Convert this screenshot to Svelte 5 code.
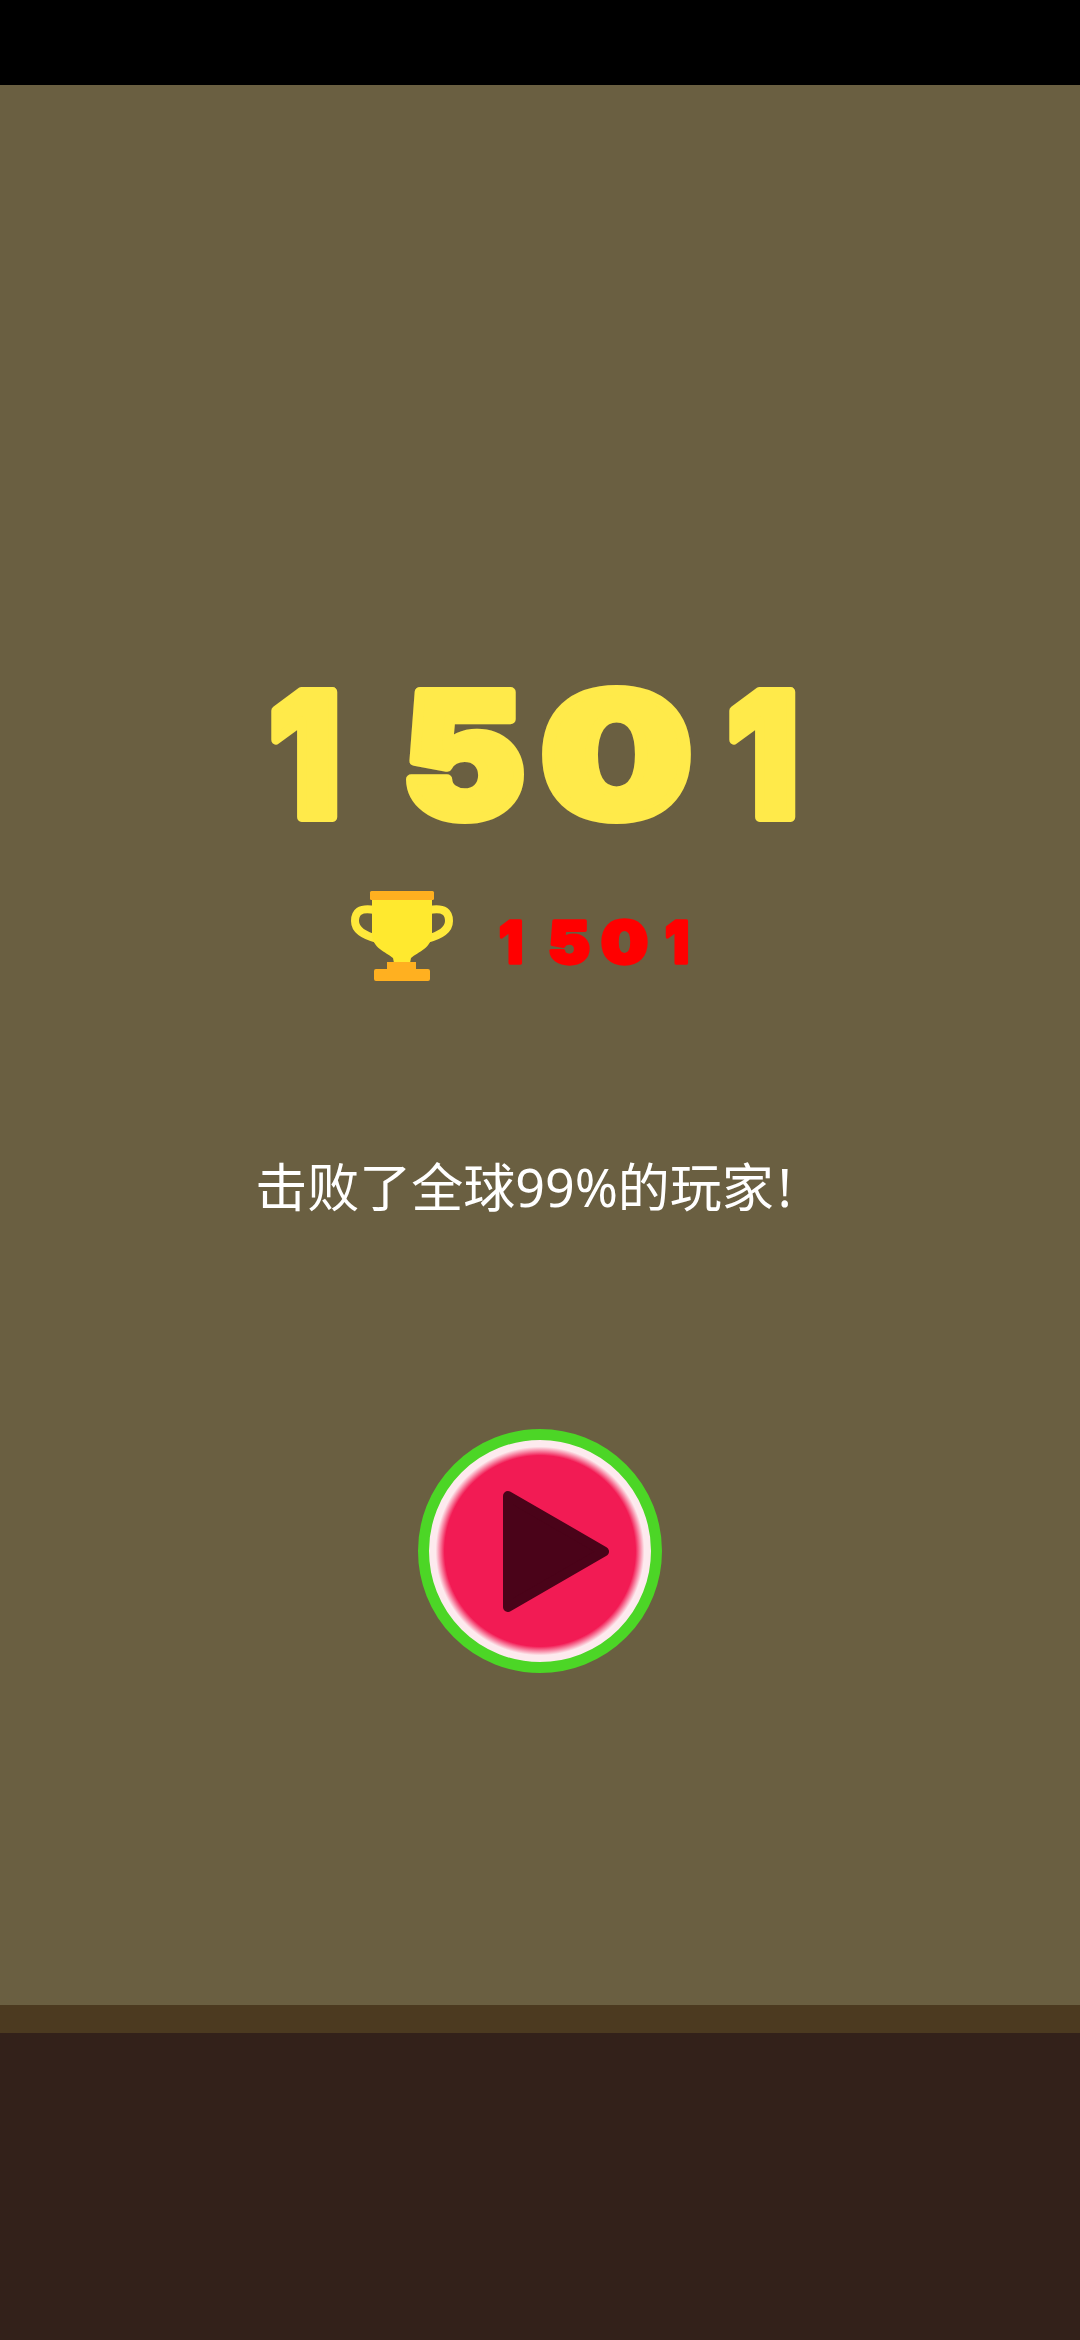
<script>
  let rank = 99
</script>

<div class="screen">
  <div class="statusbar"></div>
  <main class="stage">
    <svg class="score" viewBox="0 0 1080 200" width="1080" height="200">
      <text y="147"><tspan x="269" textLength="71" lengthAdjust="spacingAndGlyphs">1</tspan><tspan x="402" textLength="123" lengthAdjust="spacingAndGlyphs">5</tspan><tspan x="541" textLength="151" lengthAdjust="spacingAndGlyphs">0</tspan><tspan x="727" textLength="71" lengthAdjust="spacingAndGlyphs">1</tspan></text>
    </svg>
    <div class="best">
      <svg class="trophy" viewBox="0 0 102 90" width="102" height="90">
        <path d="M24 19 C8 16 4 22 4 30 C4 39 12 44 26 48" fill="none" stroke="#ffe93b" stroke-width="8" />
        <path d="M78 19 C94 16 98 22 98 30 C98 39 90 44 76 48" fill="none" stroke="#ffe93b" stroke-width="8" />
        <path d="M21 8 H81 V43 C81 57 67 61 60 67 L59 72 H43 L42 67 C35 61 21 57 21 43 Z" fill="#ffe92f" />
        <path d="M36 71 H65 V78 H77 Q79 78 79 80 V88 Q79 90 77 90 H25 Q23 90 23 88 V80 Q23 78 25 78 H36 Z" fill="#ffb020" />
        <rect x="19" y="0" width="64" height="9" rx="1.500" fill="#ffb020" />
      </svg>
      <svg class="best-value" viewBox="0 0 192 90" width="192" height="90">
        <text y="72"><tspan x="1" textLength="24" lengthAdjust="spacingAndGlyphs">1</tspan><tspan x="50" textLength="42" lengthAdjust="spacingAndGlyphs">5</tspan><tspan x="103" textLength="47" lengthAdjust="spacingAndGlyphs">0</tspan><tspan x="167" textLength="24" lengthAdjust="spacingAndGlyphs">1</tspan></text>
      </svg>
    </div>
    <p class="message">击败了全球{rank}%的玩家<span class="bang">!</span></p>
    <button class="play" aria-label="再玩一次">
      <svg viewBox="0 0 106 121" width="106" height="121">
        <path d="M5 5 L101 60.500 L5 116 Z" fill="#4a0319" stroke="#4a0319" stroke-width="10" stroke-linejoin="round" />
      </svg>
    </button>
  </main>
  <div class="ground-top"></div>
  <div class="ground"></div>
</div>

<style>
  :global(body) {
    margin: 0;
    background: #33211a;
  }
  .screen {
    display: flex;
    flex-direction: column;
    height: 2340px;
    font-family: "Noto Sans", "Noto Sans CJK SC", sans-serif;
  }
  .statusbar {
    height: 85px;
    background: #000;
  }
  .stage {
    height: 1920px;
    background: #6a5f41;
    display: flex;
    flex-direction: column;
    align-items: center;
    padding-top: 585px;
    box-sizing: border-box;
  }
  .score {
    display: block;
    flex-shrink: 0;
    overflow: visible;
  }
  .score text {
    font-family: Inter, sans-serif;
    font-weight: 900;
    font-size: 172px;
    fill: #ffea4a;
    stroke: #ffea4a;
    stroke-width: 10px;
    stroke-linejoin: round;
  }
  .best {
    display: flex;
    align-items: center;
    gap: 45px;
    margin-top: 21px;
    margin-right: 39px;
  }
  .trophy {
    display: block;
  }
  .best-value {
    display: block;
    overflow: visible;
  }
  .best-value text {
    font-family: Inter, sans-serif;
    font-weight: 900;
    font-size: 58px;
    fill: #ff0000;
    stroke: #ff0000;
    stroke-width: 3.400px;
    stroke-linejoin: round;
  }
  .message {
    margin: 171px 0 0;
    margin-right: 33px;
    font-size: 52px;
    line-height: 70px;
    color: #fff;
  }
  .bang {
    margin-left: 4px;
  }
  .play {
    margin-top: 207px;
    width: 244px;
    height: 244px;
    padding: 0 0 0 32px;
    box-sizing: border-box;
    border: 11px solid #4cd626;
    border-radius: 50%;
    background: radial-gradient(circle closest-side, #f21b54 0, #f21b54 86%, #fdeaee 94%, #fdeaee 100%);
    display: flex;
    align-items: center;
    justify-content: center;
  }
  .ground-top {
    height: 28px;
    background: #4c3a20;
  }
  .ground {
    flex: 1;
    background: #33211a;
  }
</style>
